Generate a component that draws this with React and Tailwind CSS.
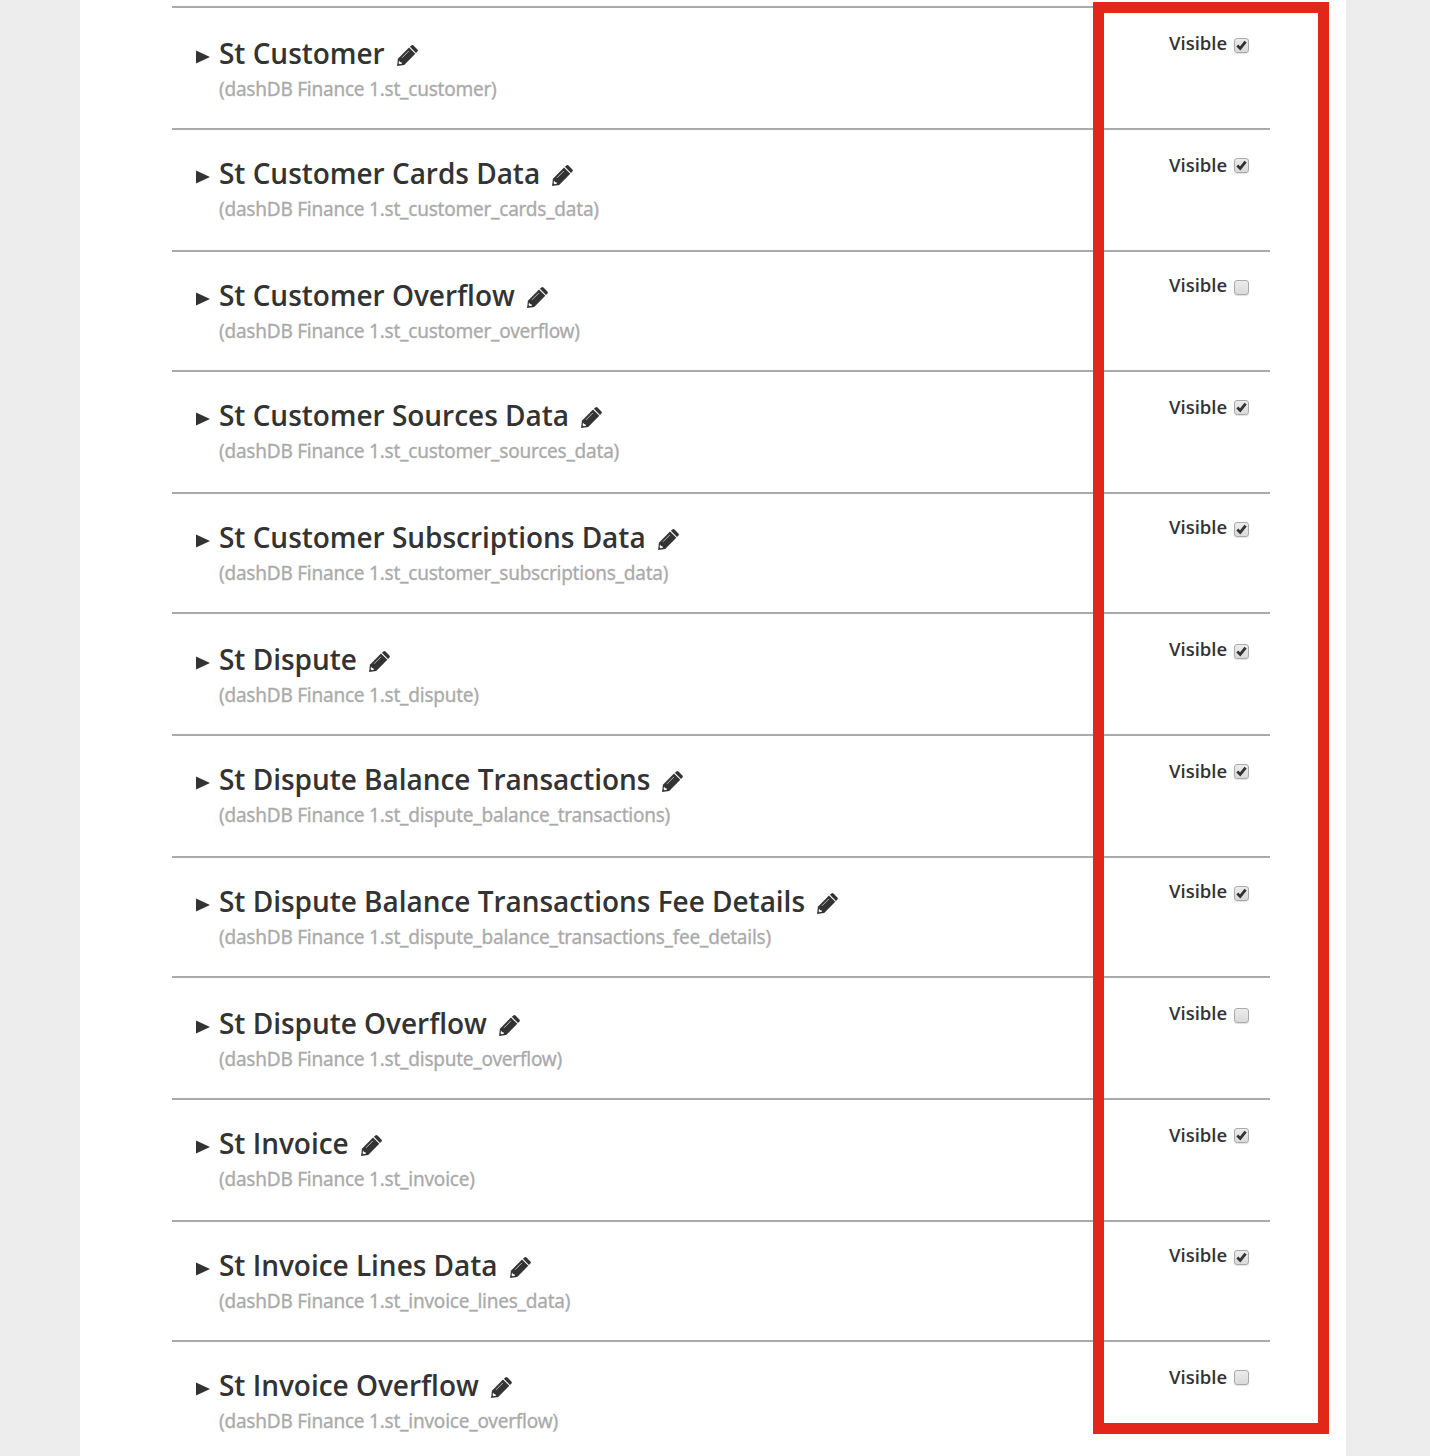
const tables = [
  { name: "St Customer", table: "st_customer", visible: true, row: "h-[122px] pt-[27px]", label: "mt-[-4px]" },
  { name: "St Customer Cards Data", table: "st_customer_cards_data", visible: true, row: "h-[122px] pt-[25px]", label: "mt-[-2px]" },
  { name: "St Customer Overflow", table: "st_customer_overflow", visible: false, row: "h-[120px] pt-[25px]", label: "mt-[-4px]" },
  { name: "St Customer Sources Data", table: "st_customer_sources_data", visible: true, row: "h-[122px] pt-[25px]", label: "mt-[-2px]" },
  { name: "St Customer Subscriptions Data", table: "st_customer_subscriptions_data", visible: true, row: "h-[120px] pt-[25px]", label: "mt-[-4px]" },
  { name: "St Dispute", table: "st_dispute", visible: true, row: "h-[122px] pt-[27px]", label: "mt-[-4px]" },
  { name: "St Dispute Balance Transactions", table: "st_dispute_balance_transactions", visible: true, row: "h-[122px] pt-[25px]", label: "mt-[-2px]" },
  { name: "St Dispute Balance Transactions Fee Details", table: "st_dispute_balance_transactions_fee_details", visible: true, row: "h-[120px] pt-[25px]", label: "mt-[-4px]" },
  { name: "St Dispute Overflow", table: "st_dispute_overflow", visible: false, row: "h-[122px] pt-[27px]", label: "mt-[-4px]" },
  { name: "St Invoice", table: "st_invoice", visible: true, row: "h-[122px] pt-[25px]", label: "mt-[-2px]" },
  { name: "St Invoice Lines Data", table: "st_invoice_lines_data", visible: true, row: "h-[120px] pt-[25px]", label: "mt-[-4px]" },
  { name: "St Invoice Overflow", table: "st_invoice_overflow", visible: false, row: "h-[116px] pt-[25px]", label: "mt-[-2px]" },
];

function Arrow() {
  return (
    <svg className="mt-[15px] h-[14px] w-[14px] shrink-0" viewBox="0 0 14 14" fill="#333">
      <path d="M0 .5 14 7 0 13.5Z" />
    </svg>
  );
}

function Pencil() {
  return (
    <svg className="mt-[10px] ml-3 h-[21px] w-[21px] shrink-0" viewBox="0 0 21 21">
      <path fill="#333" d="M.9 13.7 12 2.6l6.3 6.2L7.2 20 .1 20.9Z" />
      <path fill="#333" d="M12.9 1.8 14.4.5q1.1-.9 2.1.1l3.9 3.9q.9 1 0 2l-1.4 1.5Z" />
      <path fill="none" stroke="#bbb" strokeWidth="1" d="M5 12.8 11.9 5.9" />
      <path fill="#fff" d="M2 15.4 3 17l1.7.4.2 1.3-2.2.6-1.1-1.1Z" />
    </svg>
  );
}

function Checkbox({ checked, label }) {
  return (
    <span
      role="checkbox"
      aria-checked={checked}
      aria-label={label}
      className="mt-[3px] flex h-[15px] w-[15px] shrink-0 items-center justify-center rounded-[3px] border border-[#aaa] bg-linear-to-b from-[#ececec] to-[#dadada] shadow-[0_1px_1px_rgba(0,0,0,0.12)]"
    >
      {checked && (
        <svg className="h-[11px] w-[11px]" viewBox="0 0 11 11" fill="none" stroke="#333" strokeWidth="2.8">
          <path d="M1.3 5.6 4.2 8.4 9.6 1.6" />
        </svg>
      )}
    </span>
  );
}

function TableRow({ item }) {
  return (
    <li className={`${item.row} flex items-start border-t-2 border-[#aaa] pr-[21px] pl-6`}>
      <Arrow />
      <div className="ml-[9px] flex-1">
        <div className="flex items-start">
          <h2 className="text-[28px] leading-9 font-semibold tracking-[-0.03px] whitespace-nowrap">
            {item.name}
          </h2>
          <Pencil />
        </div>
        <p className="mt-[6px] font-['Noto_Sans',sans-serif] text-[19px] leading-6 tracking-[-0.23px] whitespace-nowrap text-[#aaa] [-webkit-text-stroke:0.3px_#aaa]">
          (dashDB Finance 1.{item.table})
        </p>
      </div>
      <div className="flex items-start">
        <span className={`${item.label} mr-[7px] w-[58px] text-[18.5px] leading-6 font-semibold whitespace-nowrap`}>
          Visible
        </span>
        <Checkbox checked={item.visible} label={`${item.name} visible`} />
      </div>
    </li>
  );
}

export default function App() {
  return (
    <div className="relative h-[1456px] overflow-hidden bg-[#ededed] px-20 font-['Open_Sans',sans-serif] text-[#333]">
      <main className="h-full w-[1266px] bg-white pt-[6px] pr-[76px] pl-[92px]">
        <ul>
          {tables.map((item) => (
            <TableRow key={item.table} item={item} />
          ))}
        </ul>
      </main>
      <div className="absolute top-[2px] left-[1093px] h-[1432px] w-[236px] border-[11px] border-[#e22718]" />
    </div>
  );
}
